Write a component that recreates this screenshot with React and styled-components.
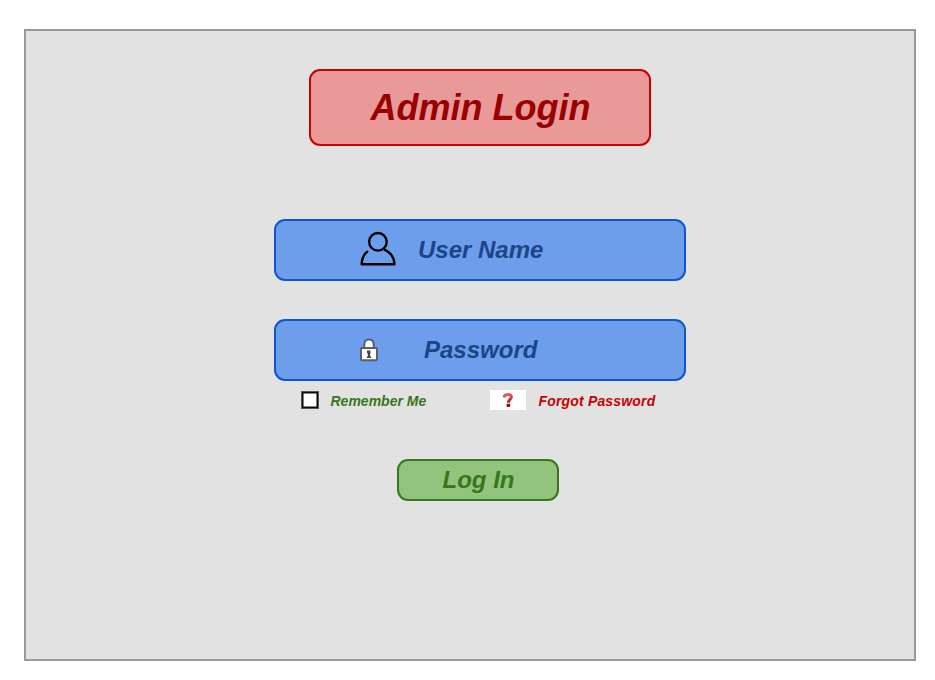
import React from "react";
import styled, { createGlobalStyle } from "styled-components";

const GlobalStyle = createGlobalStyle`
  * { box-sizing: border-box; }
  body {
    margin: 0;
    background: #ffffff;
    font-family: "Liberation Sans", Arial, sans-serif;
    font-weight: bold;
    font-style: italic;
  }
`;

const Frame = styled.main`
  width: 892px;
  height: 632px;
  margin: 29px 0 0 24px;
  padding: 38px 0 0 248px;
  border: 2px solid #999999;
  background: #e2e2e2;
`;

const Form = styled.form`
  display: flex;
  flex-direction: column;
  width: 412px;
  margin: 0;
`;

const Title = styled.h1`
  display: flex;
  align-items: center;
  justify-content: center;
  width: 342px;
  height: 77px;
  margin: 0 auto 73px;
  padding-left: 1px;
  border: 2px solid #cc0000;
  border-radius: 11px;
  background: #ea9999;
  color: #990000;
  font-size: 36px;
  line-height: 42px;
`;

const Field = styled.div`
  display: flex;
  align-items: center;
  height: 62px;
  margin-bottom: ${(p) => p.$gap}px;
  padding-left: 83px;
  border: 2px solid #1155cc;
  border-radius: 11px;
  background: #6d9eeb;
  color: #1c4587;
  font-size: 24px;
  line-height: 28px;
`;

const FieldIcon = styled.span`
  display: flex;
  width: ${(p) => p.$slot}px;
  padding-bottom: ${(p) => p.$lift || 0}px;
`;

const Options = styled.div`
  display: flex;
  align-items: center;
  height: 20px;
  margin: 0 0 49px 27px;
  font-size: 14px;
  line-height: 16px;
`;

const Remember = styled.label`
  display: flex;
  align-items: center;
  width: 189px;
  color: #38761d;
`;

const Checkbox = styled.span`
  width: 18px;
  height: 18px;
  margin-right: 11.5px;
  border: 1px solid #555555;
  background: #ffffff;
  box-shadow: inset 0 0 0 1.5px #080808;
`;

const Forgot = styled.a`
  display: flex;
  align-items: center;
  color: #cc0000;
`;

const HelpBadge = styled.span`
  display: flex;
  justify-content: center;
  width: 36px;
  height: 20px;
  margin-right: 12.5px;
  background: #ffffff;
`;

const OptionText = styled.span`
  padding-top: 2px;
  letter-spacing: ${(p) => p.$tracking || 0}px;
`;

const LoginButton = styled.button`
  width: 162px;
  height: 42px;
  margin-left: 123px;
  padding: 0 0 0 1px;
  border: 2px solid #38761d;
  border-radius: 11px;
  background: #93c47d;
  color: #38761d;
  font: inherit;
  font-size: 24px;
  line-height: 28px;
`;

const UserIcon = () => (
  <svg width="38" height="36" viewBox="0 0 38 36" fill="none" stroke="#000" strokeWidth="2.4" strokeLinejoin="round" strokeLinecap="round">
    <circle cx="18.9" cy="10.8" r="8.8" />
    <path d="M8.2 20.7C4.5 23.5 2.8 27.8 2.6 33.3H35.4C35.3 27.2 32.3 22 25.5 18.7" />
  </svg>
);

const LockIcon = () => (
  <svg width="20" height="24" viewBox="0 0 20 24">
    <path d="M5.3 10V6.5C5.3 3.6 7 1.5 10 1.5s4.7 2.1 4.7 5V10Z" fill="#fff" stroke="#5b6068" strokeWidth="2" />
    <rect x="2" y="9.9" width="16" height="12.3" rx="0.7" fill="#fff" stroke="#5b6068" strokeWidth="2" />
    <path d="M8 12.6H11.4V15.5L11 17L11.3 18.5H12.2V20H7.8V18.5H8.8V15.3H8Z" fill="#444" />
  </svg>
);

const QuestionIcon = () => (
  <svg width="14" height="20" viewBox="0 0 14 20">
    <defs>
      <linearGradient id="question" x1="0" y1="3" x2="0" y2="17" gradientUnits="userSpaceOnUse">
        <stop offset="0" stopColor="#ee6666" />
        <stop offset="0.4" stopColor="#d63b3f" />
        <stop offset="0.75" stopColor="#9e171b" />
      </linearGradient>
    </defs>
    <path d="M3.2 7.4C3.3 5.1 4.8 4.5 7 4.5C9.3 4.5 10.4 5.4 10.4 7C10.4 9.6 7.4 9 7.4 12.8" fill="none" stroke="url(#question)" strokeWidth="3" />
    <rect x="5.6" y="13.8" width="3.6" height="3.2" rx="0.7" fill="#8d1013" />
  </svg>
);

export default function App() {
  return (
    <>
      <GlobalStyle />
      <Frame>
        <Form>
          <Title>Admin Login</Title>
          <Field $gap={38}>
            <FieldIcon $slot={59} $lift={2}><UserIcon /></FieldIcon>
            User Name
          </Field>
          <Field $gap={9}>
            <FieldIcon $slot={65}><LockIcon /></FieldIcon>
            Password
          </Field>
          <Options>
            <Remember>
              <Checkbox />
              <OptionText>Remember Me</OptionText>
            </Remember>
            <Forgot>
              <HelpBadge><QuestionIcon /></HelpBadge>
              <OptionText $tracking={0.17}>Forgot Password</OptionText>
            </Forgot>
          </Options>
          <LoginButton type="button">Log In</LoginButton>
        </Form>
      </Frame>
    </>
  );
}
